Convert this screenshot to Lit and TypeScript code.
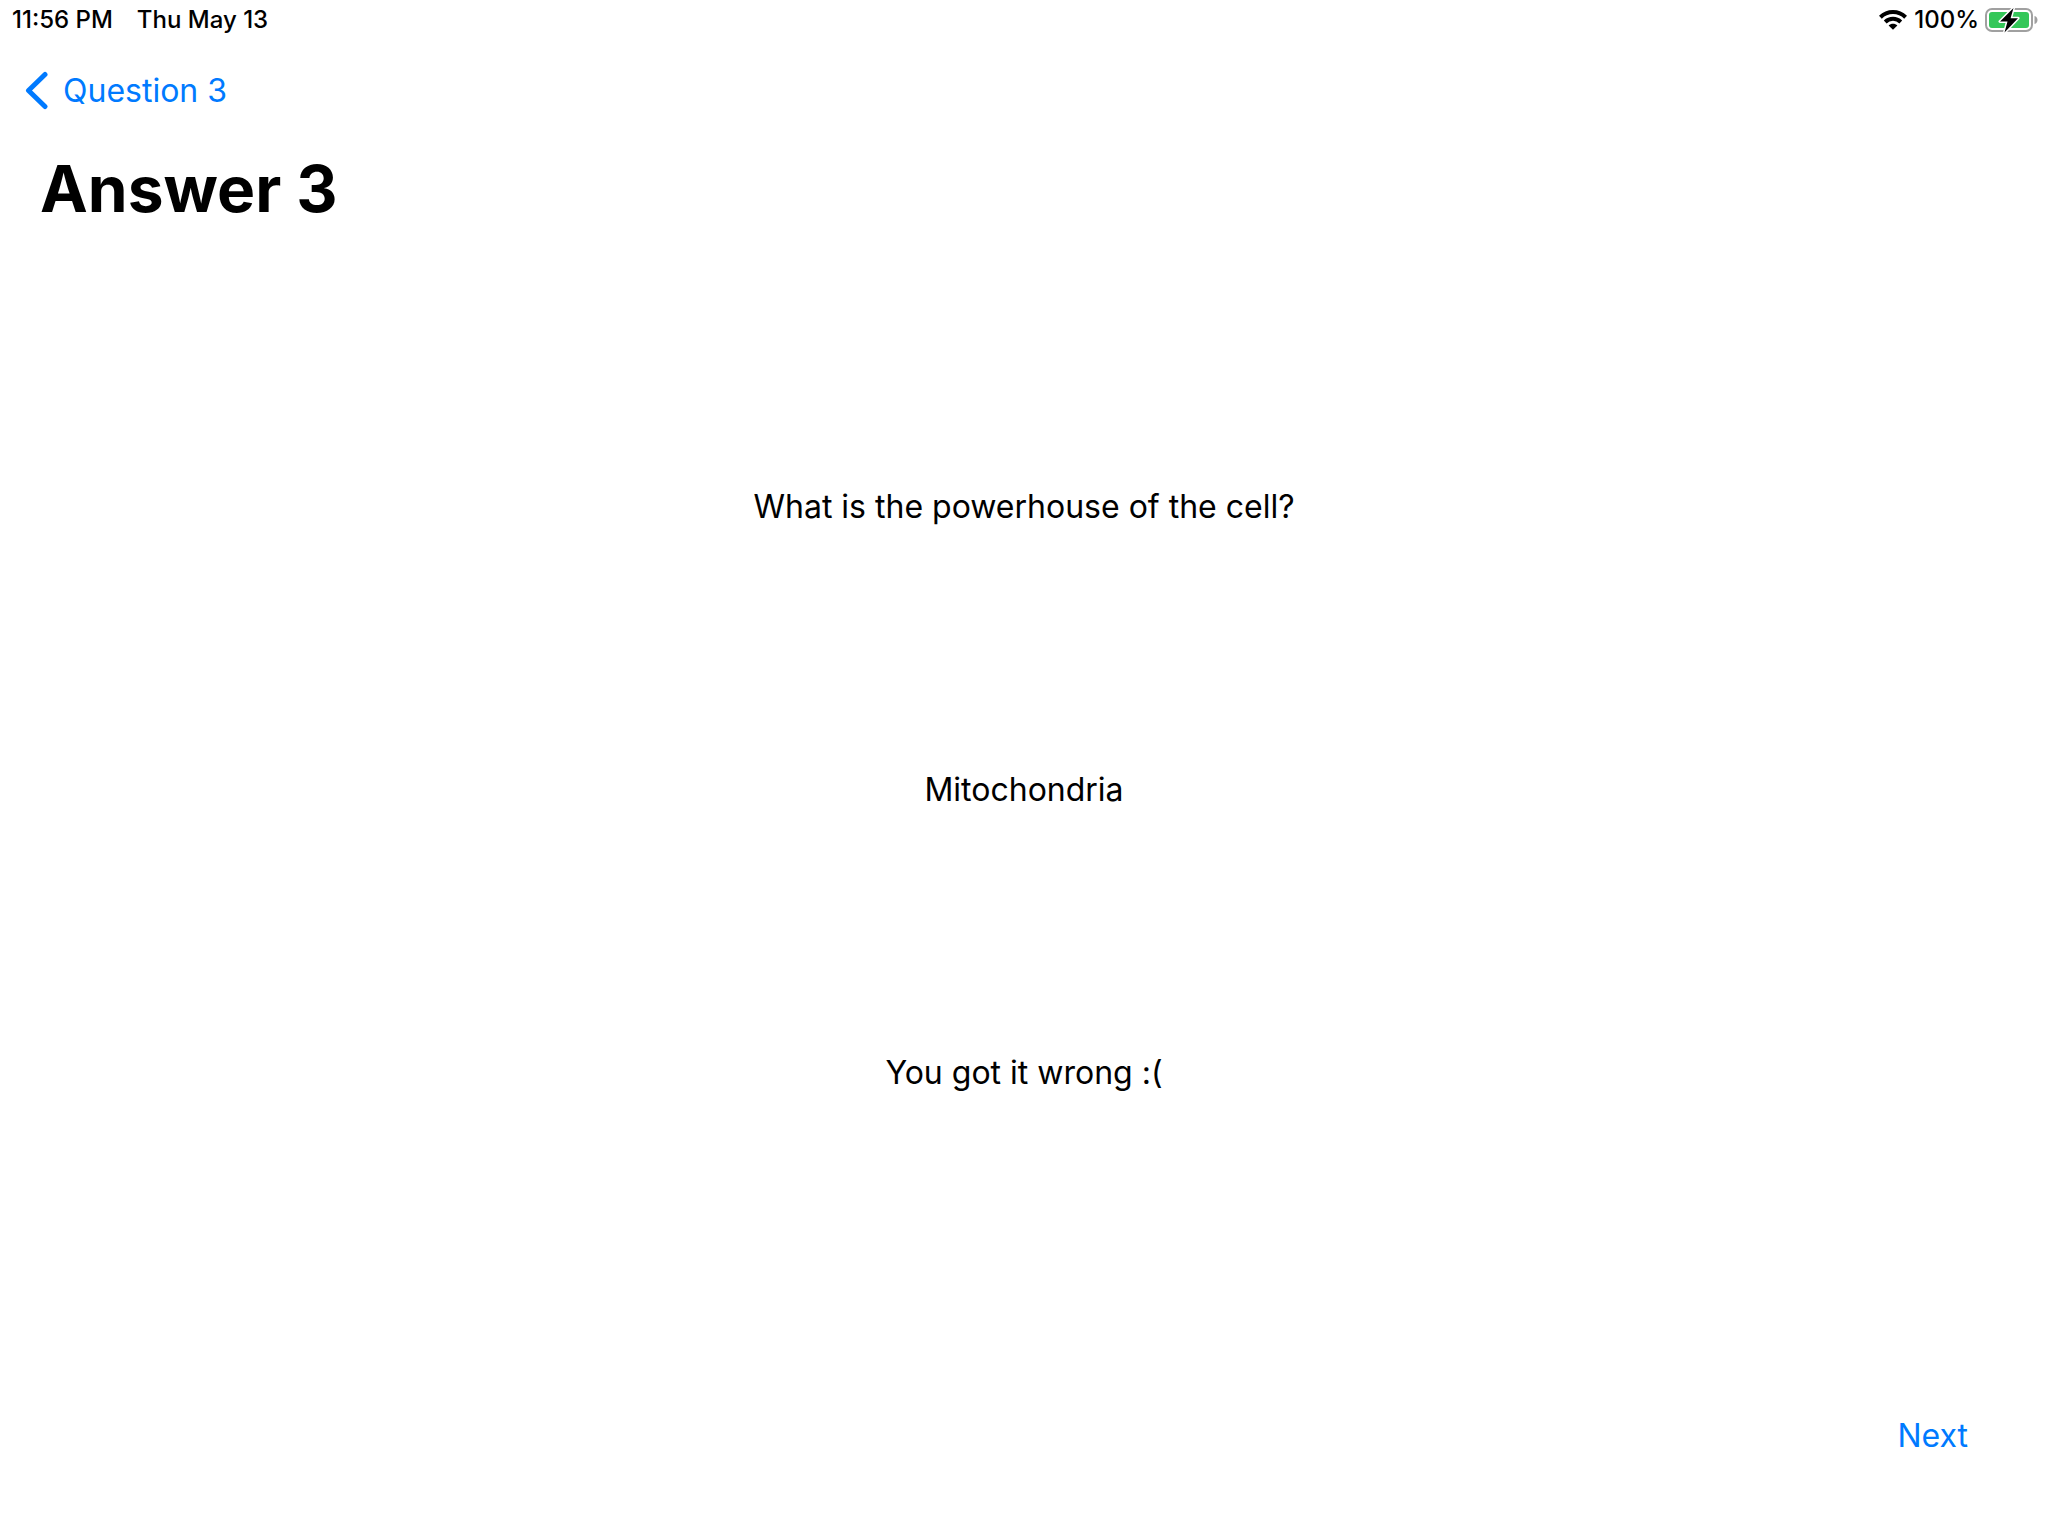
import { LitElement, html, css } from "lit";
import { customElement } from "lit/decorators.js";

@customElement("app-root")
export class AppRoot extends LitElement {
  static styles = css`
    :host {
      display: flex;
      flex-direction: column;
      box-sizing: border-box;
      min-height: 100vh;
      background: #fff;
      color: #000;
      font-family: Inter, "Liberation Sans", sans-serif;
      font-size: 32px;
      line-height: 40px;
    }
    .status {
      display: flex;
      justify-content: space-between;
      align-items: center;
      height: 40px;
      padding: 0 9px 0 12px;
      font-size: 24px;
      font-weight: 500;
    }
    .group {
      display: flex;
      align-items: center;
      gap: 24px;
    }
    .group.tight {
      gap: 6px;
    }
    .nav {
      display: flex;
      align-items: center;
      height: 102px;
      padding: 0 24px;
    }
    a,
    .next {
      color: #007aff;
      text-decoration: none;
    }
    .back {
      display: flex;
      align-items: center;
      gap: 15px;
    }
    .back svg,
    .group svg {
      display: block;
    }
    h1 {
      margin: 0;
      padding: 7px 40px;
      font-size: 64px;
      line-height: 80px;
      font-weight: 700;
    }
    .content {
      flex: 1;
      display: flex;
      flex-direction: column;
      align-items: center;
      justify-content: center;
      gap: 243px;
      padding-bottom: 72px;
      text-align: center;
    }
    p {
      margin: 0;
    }
    .footer {
      display: flex;
      justify-content: flex-end;
      padding: 0 80px 80px;
    }
    .next {
      font: inherit;
      border: 0;
      padding: 0;
      background: none;
    }
  `;

  render() {
    return html`
      <header class="status">
        <div class="group"><span>11:56 PM</span><span>Thu May 13</span></div>
        <div class="group tight">
          <svg width="30" height="22" viewBox="0 0 30 22" role="img" aria-label="Wi-Fi">
            <g fill="none" stroke="currentColor" stroke-width="4">
              <path d="M2.4 8.2C9.4 1.4 20.6 1.4 27.6 8.2" />
              <path d="M7.2 13C11.6 8.8 18.4 8.8 22.8 13" />
            </g>
            <path d="M10.6 16.4C13 14.2 17 14.2 19.4 16.4L15 20.8Z" fill="currentColor" />
          </svg>
          <span>100%</span>
          <svg width="54" height="26" viewBox="0 0 54 26" role="img" aria-label="Battery charging">
            <rect x="1" y="2" width="46" height="22" rx="6" fill="none" stroke="#a0a0a0" stroke-width="2" />
            <path d="M49.5 9C53.5 10 53.5 16 49.5 17Z" fill="#a0a0a0" />
            <rect x="4" y="5" width="40" height="16" rx="3" fill="#34c759" />
            <path d="M28.5 1L15 14.5H22.5L19.5 25.5L33 11.2H25.6Z" fill="#000" stroke="#fff" stroke-width="3" paint-order="stroke" stroke-linejoin="round" />
          </svg>
        </div>
      </header>
      <nav class="nav">
        <a class="back" href="#question-3">
          <svg width="24" height="40" viewBox="0 0 24 40"><path d="M21 3.5L4.5 19.5L21 35.5" fill="none" stroke="currentColor" stroke-width="5" stroke-linecap="round" stroke-linejoin="round" /></svg>
          <span>Question 3</span>
        </a>
      </nav>
      <h1>Answer 3</h1>
      <main class="content">
        <p>What is the powerhouse of the cell?</p>
        <p>Mitochondria</p>
        <p>You got it wrong :(</p>
      </main>
      <footer class="footer"><button class="next" type="button">Next</button></footer>
    `;
  }
}
